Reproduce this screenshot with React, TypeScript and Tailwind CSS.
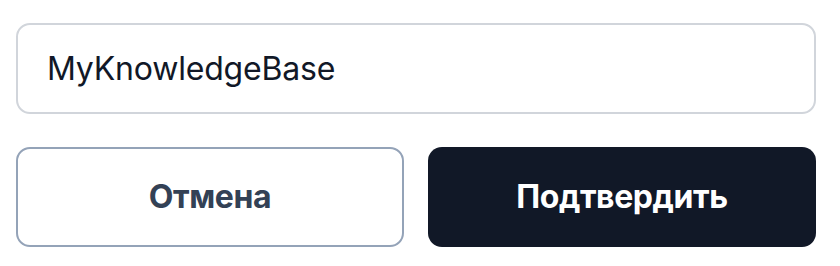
import { useState } from "react";

export default function App() {
  const [name, setName] = useState("MyKnowledgeBase");

  return (
    <div className="flex h-[266px] w-[840px] flex-col gap-[33px] bg-white pl-4 pr-6 pt-[23px] font-['Inter',sans-serif]">
      <input
        value={name}
        onChange={(e) => setName(e.target.value)}
        className="h-[91px] w-full rounded-[14px] border-2 border-[#d1d5db] bg-white px-[29px] text-[32px] tracking-[-0.2px] text-[#111827] outline-none"
      />
      <div className="grid grid-cols-2 gap-6">
        <button className="h-[100px] rounded-[14px] border-2 border-[#94a3b8] bg-white text-[32px] font-bold tracking-[-0.4px] text-[#334155]">
          Отмена
        </button>
        <button className="h-[100px] rounded-[14px] bg-[#111827] text-[32px] font-bold tracking-[-0.4px] text-white">
          Подтвердить
        </button>
      </div>
    </div>
  );
}
